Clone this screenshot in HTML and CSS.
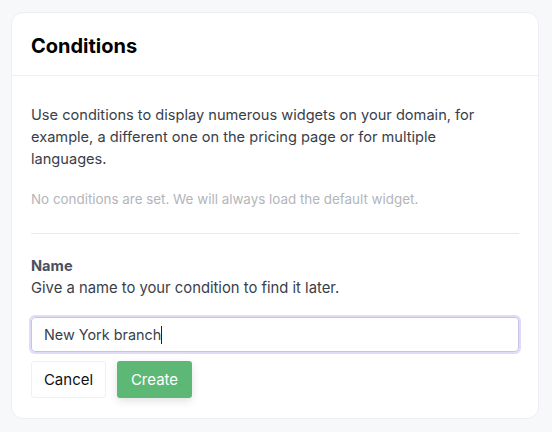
FILE: index.html
```
<!DOCTYPE html>
<html>
<head>
<meta charset="utf-8">
<link rel="stylesheet" href="styles.css">
</head>
<body>
<div class="card">
  <div class="card-header">
    <h1 class="title">Conditions</h1>
  </div>
  <div class="card-body">
    <p class="intro">Use conditions to display numerous widgets on your domain, for example, a different one on the pricing page or for multiple languages.</p>
    <p class="empty">No conditions are set. We will always load the default widget.</p>
    <hr class="divider">
    <div class="field">
      <div class="label">Name</div>
      <div class="hint">Give a name to your condition to find it later.</div>
      <div class="input"><span class="value">New York branch</span><span class="caret"></span></div>
    </div>
    <div class="actions">
      <button class="btn btn-cancel">Cancel</button>
      <button class="btn btn-create">Create</button>
    </div>
  </div>
</div>
</body>
</html>
```
FILE: styles.css
```
* { box-sizing: border-box; }
body {
  margin: 0;
  background: #f7f8fa;
  font-family: Inter, "Noto Sans", sans-serif;
  color: #3d4250;
}
.card {
  margin: 12px 13px 13px 11px;
  width: 528px;
  height: 407px;
  background: #fff;
  border: 1px solid #eceef1;
  border-radius: 12px;
}
.card-header {
  padding: 21px 20px 17px 19px;
  border-bottom: 1px solid #eef0f2;
}
.title {
  margin: 0;
  font-size: 20px;
  line-height: 24px;
  font-weight: 700;
  color: #000;
}
.card-body {
  padding: 28px 19px 20px 19px;
}
.intro {
  margin: 0;
  max-width: 470px;
  font-size: 14.6px;
  line-height: 22px;
  color: #393e4a;
}
.empty {
  margin: 20px 0 0;
  font-size: 13.4px;
  line-height: 18px;
  color: #b3b5ba;
}
.divider {
  margin: 25px 0 0;
  border: 0;
  border-top: 1px solid #e8e9ec;
}
.field { margin-top: 21px; }
.label {
  font-size: 14.6px;
  line-height: 22px;
  font-weight: 700;
  color: #4b505c;
}
.hint {
  font-size: 14.8px;
  line-height: 22px;
  color: #393e4a;
}
.input {
  margin-top: 18px;
  height: 35px;
  border: 1px solid #c8c1ec;
  box-shadow: 0 0 0 2px #e0dbf7;
  border-radius: 4px;
  display: flex;
  align-items: center;
  padding: 0 12px;
  font-size: 14.4px;
  color: #393e4a;
}
.caret {
  display: inline-block;
  width: 1px;
  height: 18px;
  background: #222;
}
.actions {
  margin-top: 9px;
  display: flex;
  gap: 11px;
}
.btn {
  font-family: inherit;
  font-size: 15px;
  height: 37px;
  width: 75px;
  border-radius: 3px;
  padding: 0;
  cursor: pointer;
}
.btn-cancel {
  background: #fff;
  border: 1px solid #eef0f2;
  color: #111;
}
.btn-create {
  background: #5cb874;
  border: 0;
  color: #fff;
  box-shadow: 0 3px 8px rgba(0, 0, 0, 0.12);
}
```
